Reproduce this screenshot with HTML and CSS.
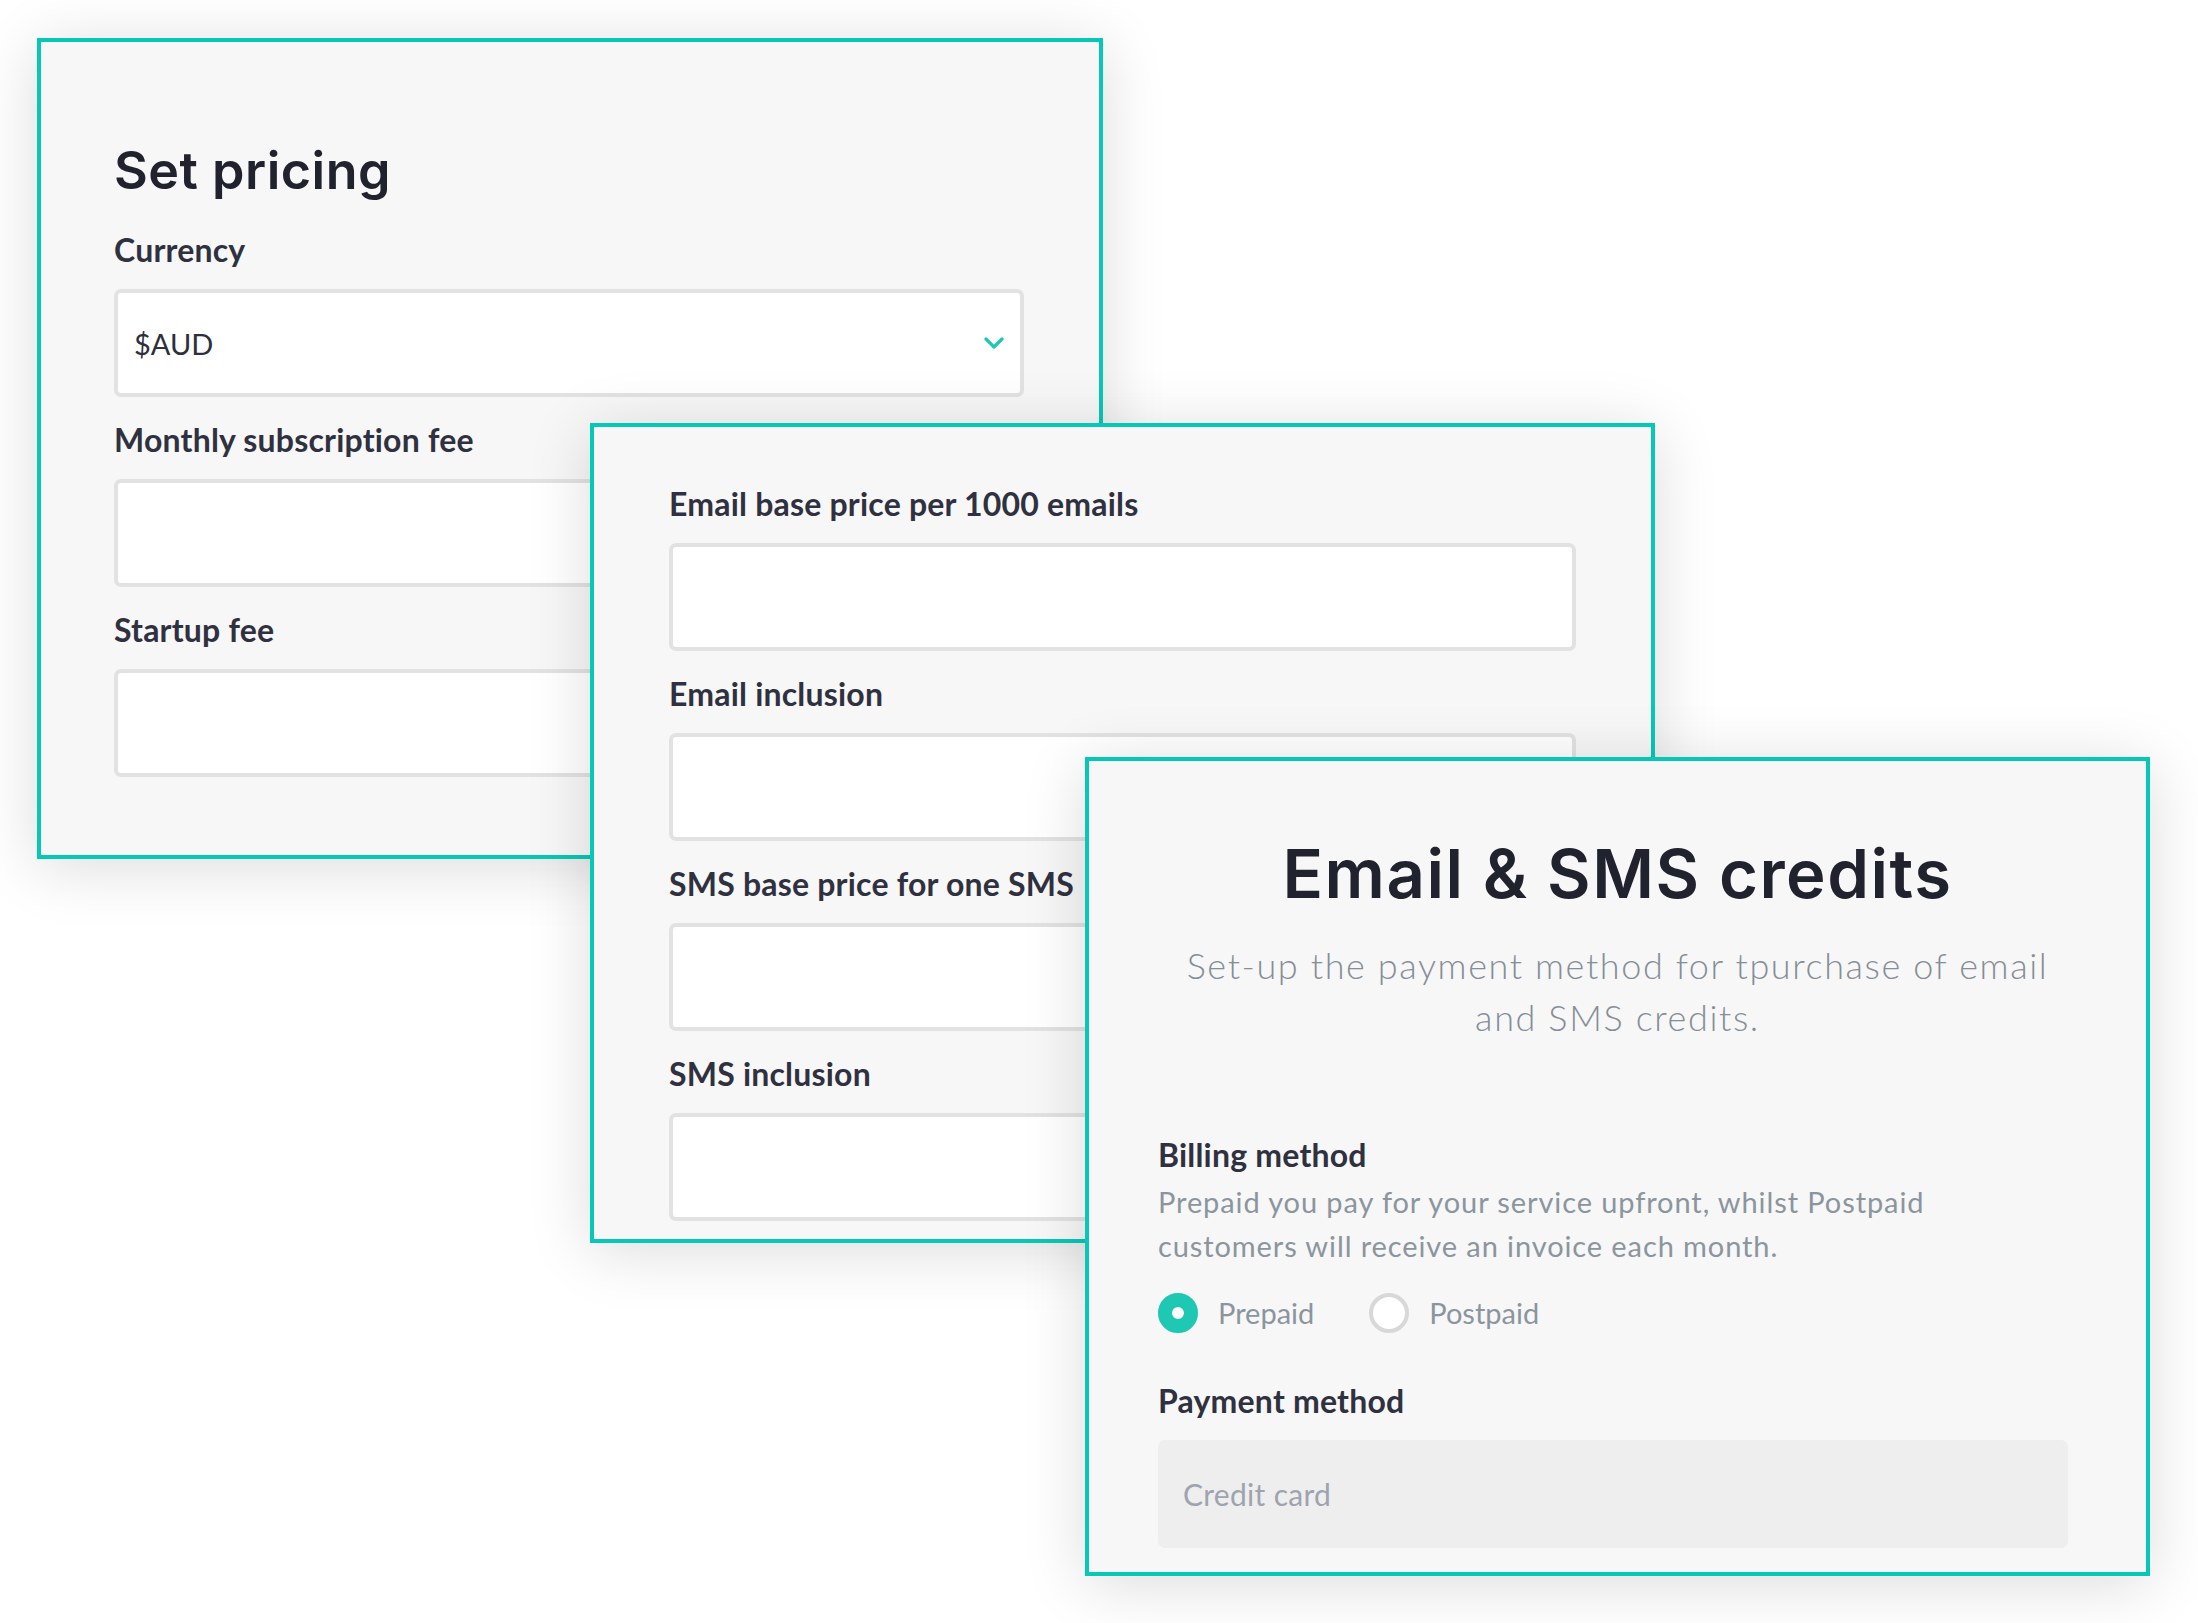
FILE: index.html
```html
<!DOCTYPE html>
<html lang="en">
<head>
<meta charset="utf-8">
<title>Pricing settings</title>
<link rel="stylesheet" href="styles.css">
</head>
<body>
<div class="canvas">
  <section class="card card-pricing">
    <h1 class="title">Set pricing</h1>
    <div class="field">
      <label class="label">Currency</label>
      <div class="input select">
        <span class="select-value">$AUD</span>
        <svg class="chevron" width="20" height="12" viewBox="0 0 20 12"><path d="M2 2 L10 10 L18 2" fill="none" stroke="#1ec8b4" stroke-width="3.2" stroke-linecap="round" stroke-linejoin="round"/></svg>
      </div>
    </div>
    <div class="field">
      <label class="label">Monthly subscription fee</label>
      <div class="input"></div>
    </div>
    <div class="field">
      <label class="label">Startup fee</label>
      <div class="input"></div>
    </div>
  </section>

  <section class="card card-usage">
    <div class="field">
      <label class="label">Email base price per 1000 emails</label>
      <div class="input"></div>
    </div>
    <div class="field">
      <label class="label">Email inclusion</label>
      <div class="input"></div>
    </div>
    <div class="field">
      <label class="label">SMS base price for one SMS</label>
      <div class="input"></div>
    </div>
    <div class="field">
      <label class="label">SMS inclusion</label>
      <div class="input"></div>
    </div>
  </section>

  <section class="card card-credits">
    <h2 class="title title-center">Email &amp; SMS credits</h2>
    <p class="subtitle">Set-up the payment method for tpurchase of email<br>and SMS credits.</p>
    <div class="group">
      <label class="label">Billing method</label>
      <p class="help">Prepaid you pay for your service upfront, whilst Postpaid<br>customers will receive an invoice each month.</p>
      <div class="radios">
        <span class="radio checked"></span><span class="radio-text">Prepaid</span>
        <span class="radio"></span><span class="radio-text">Postpaid</span>
      </div>
    </div>
    <div class="field">
      <label class="label">Payment method</label>
      <div class="input disabled"><span class="placeholder">Credit card</span></div>
    </div>
  </section>
</div>
</body>
</html>
```

FILE: styles.css
```css
html, body {
  margin: 0;
  padding: 0;
  background: #ffffff;
}

.canvas {
  position: relative;
  width: 2198px;
  height: 1623px;
  overflow: hidden;
  font-family: "Lato", "Open Sans", sans-serif;
}

.card {
  position: absolute;
  box-sizing: border-box;
  width: 1065px;
  height: 820px;
  border: 4px solid #07c8b6;
  background: #f7f7f7;
  box-shadow: 0 8px 60px rgba(0, 0, 0, 0.14);
  overflow: hidden;
  display: flex;
  flex-direction: column;
}

.card-pricing {
  left: 37px;
  top: 38px;
  width: 1066px;
  height: 821px;
  padding: 99px 0 0 73px;
  z-index: 1;
}

.card-usage {
  left: 590px;
  top: 423px;
  padding: 57px 0 0 75px;
  z-index: 2;
}

.card-credits {
  left: 1085px;
  top: 757px;
  height: 819px;
  padding: 73px 0 0 69px;
  z-index: 3;
}

.title {
  margin: 0 0 29px 0;
  font-family: "Inter", "Lato", sans-serif;
  font-weight: 600;
  font-size: 52px;
  line-height: 60px;
  letter-spacing: 0.5px;
  color: #20232e;
}

.title-center {
  font-size: 67px;
  line-height: 80px;
  letter-spacing: 1.5px;
  text-align: center;
  margin: 0 0 25px -69px;
  width: 1057px;
}

.subtitle {
  margin: 0 0 92px -69px;
  width: 1057px;
  text-align: center;
  font-weight: 300;
  font-size: 36px;
  line-height: 52px;
  letter-spacing: 1.6px;
  color: #848e97;
}

.field {
  display: flex;
  flex-direction: column;
  margin-bottom: 23px;
}

.label {
  display: block;
  font-weight: 700;
  font-size: 32px;
  line-height: 40px;
  letter-spacing: 0.2px;
  color: #2f3140;
  margin-bottom: 19px;
}

.input {
  box-sizing: border-box;
  width: 910px;
  height: 108px;
  background: #ffffff;
  border: 4px solid #e2e2e2;
  border-radius: 7px;
  display: flex;
  align-items: center;
}

.card-usage .input {
  width: 907px;
}

.select {
  justify-content: space-between;
  padding: 0 16px 0 16px;
}

.select-value {
  font-size: 29px;
  color: #2d2f3b;
}

.chevron {
  display: block;
}

.group .label {
  margin-bottom: 5px;
}

.help {
  margin: 0 0 25px 0;
  font-size: 29px;
  line-height: 44px;
  letter-spacing: 0.9px;
  color: #8b959e;
}

.group {
  margin-bottom: 48px;
}

.radios {
  display: flex;
  align-items: center;
}

.radio {
  box-sizing: border-box;
  width: 40px;
  height: 40px;
  border-radius: 50%;
  border: 4px solid #d8d8d8;
  background: #ffffff;
  margin-right: 20px;
}

.radio.checked {
  border: 14px solid #1fc8b3;
}

.radio-text {
  font-size: 29px;
  line-height: 40px;
  color: #8b959e;
  margin-right: 55px;
}

.disabled {
  background: #eeeeee;
  border-color: #eeeeee;
  padding-left: 21px;
}

.placeholder {
  font-size: 30px;
  letter-spacing: 0.3px;
  color: #9ea3b0;
}
```
